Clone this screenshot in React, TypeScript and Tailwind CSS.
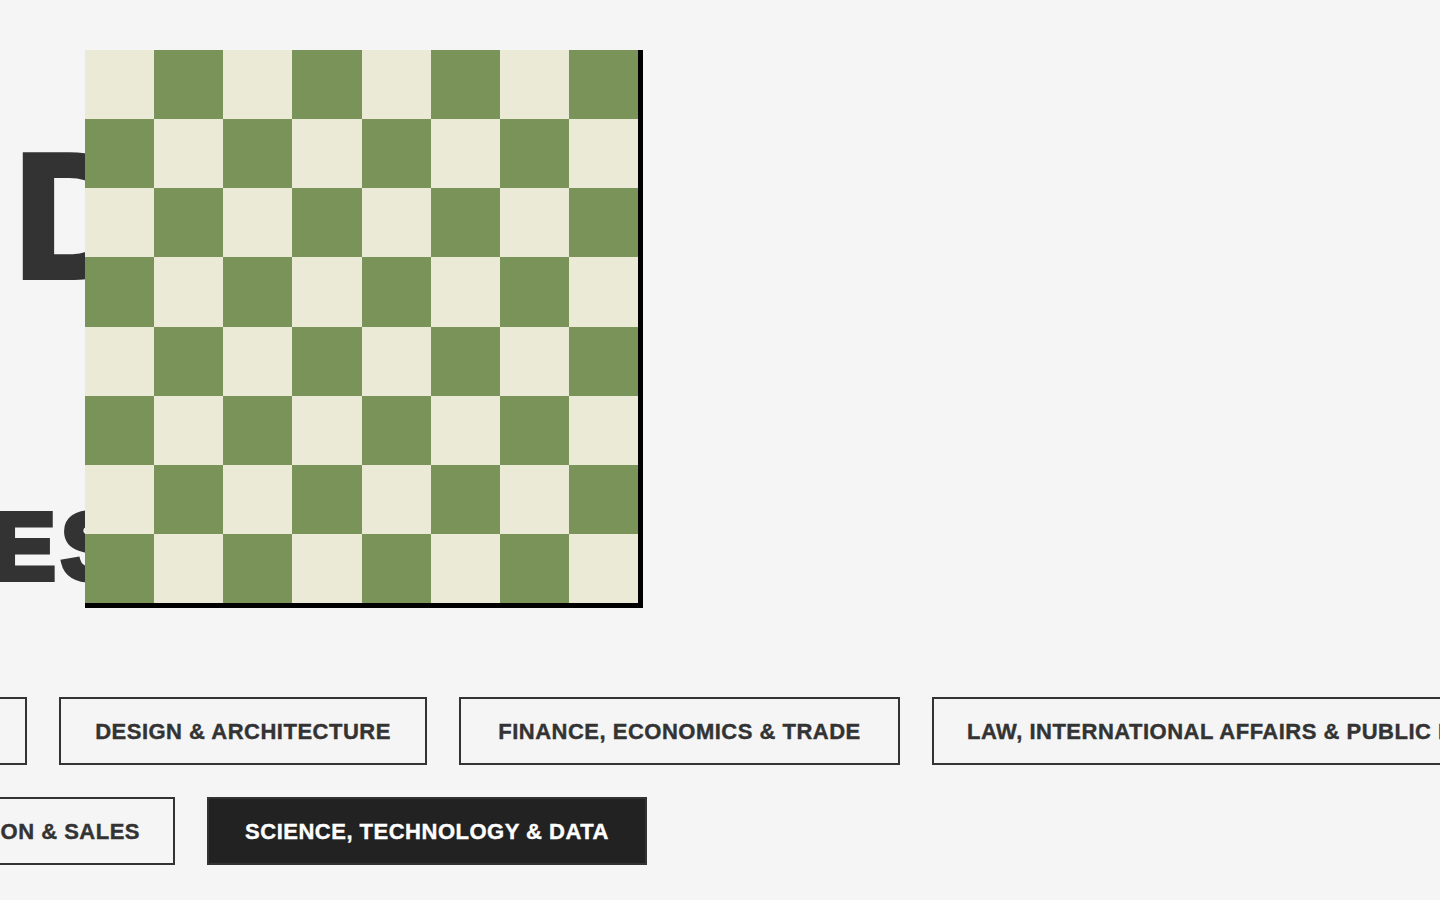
import React from "react";

const LIGHT = "bg-[#ebead6]";
const GREEN = "bg-[#7a9358]";

const Board = () => {
  const cells = [];
  for (let r = 0; r < 8; r++) {
    for (let c = 0; c < 8; c++) {
      cells.push(
        <div key={`${r}-${c}`} className={(r + c) % 2 === 0 ? LIGHT : GREEN} />
      );
    }
  }
  return (
    <div className="absolute left-[85px] top-[50px] grid h-[558px] w-[558px] grid-cols-8 grid-rows-8 border-r-[5px] border-b-[5px] border-black">
      {cells}
    </div>
  );
};

const Tag = ({
  label,
  width = "",
  active = false,
}: {
  label: string;
  width?: string;
  active?: boolean;
}) => (
  <div
    className={`flex h-[68px] shrink-0 items-center justify-center whitespace-nowrap border-2 border-[#333] px-[33px] text-[22px] font-bold tracking-[0.5px] [-webkit-text-stroke:0.4px_currentColor] ${width} ${
      active ? "bg-[#222] text-white" : "text-[#333]"
    }`}
  >
    {label}
  </div>
);

// first tag of a row is cut by the left edge: it is right-aligned in a slot
const Lead = ({ label, end }: { label: string; end: string }) => (
  <div className={`flex shrink-0 justify-end ${end}`}>
    <Tag label={label} />
  </div>
);

export default function App() {
  return (
    <div
      className="relative h-[900px] w-[1440px] overflow-hidden bg-[#f5f5f5] text-[#333]"
      style={{ fontFamily: '"Liberation Sans", Arial, sans-serif' }}
    >
      {/* Headline behind the board */}
      <div className="flex flex-col font-bold [-webkit-text-stroke:6px_#333]">
        <div className="mt-[128px] h-[176px] pl-[14px] text-[176px] leading-none">D</div>
        <div className="mt-[195px] -ml-[8px] h-[95px] text-[95px] leading-none tracking-[6px]">
          ES
        </div>
      </div>

      <Board />

      {/* Category tags */}
      <div className="mt-[103px] flex flex-col gap-[32px]">
        <div className="flex gap-[32px]">
          <Lead label="BUSINESS & MANAGEMENT" end="w-[27px]" />
          <Tag label="DESIGN & ARCHITECTURE" width="w-[368px]" />
          <Tag label="FINANCE, ECONOMICS & TRADE" width="w-[441px]" />
          <Tag label="LAW, INTERNATIONAL AFFAIRS & PUBLIC POLICY" />
        </div>
        <div className="flex gap-[32px]">
          <Lead label="MARKETING, COMMUNICATION & SALES" end="w-[175px]" />
          <Tag label="SCIENCE, TECHNOLOGY & DATA" width="w-[440px]" active />
        </div>
      </div>
    </div>
  );
}
